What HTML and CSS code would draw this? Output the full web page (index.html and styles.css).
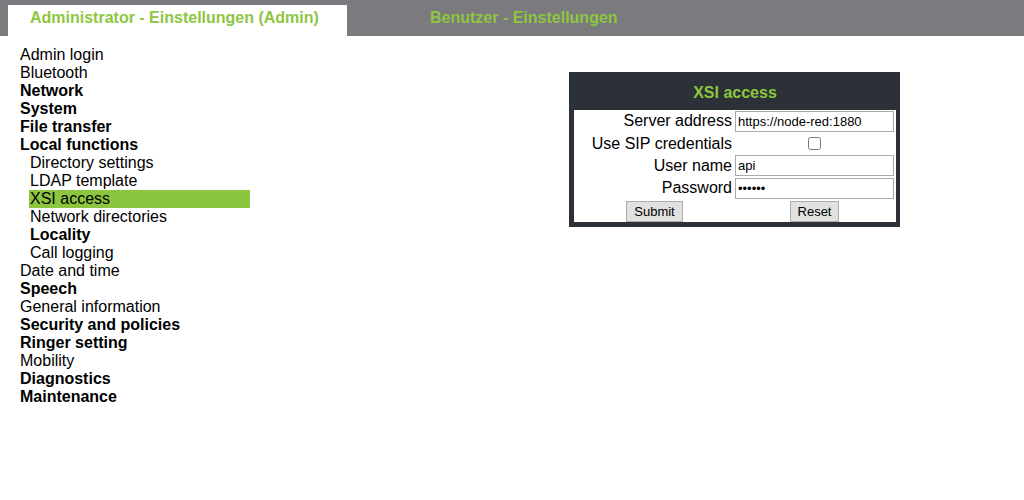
FILE: index.html
```html
<!DOCTYPE html>
<html>

<head>
    <meta charset="UTF-8">
    <title>XSI access</title>
    <link rel="stylesheet" href="styles.css">
</head>

<body>
    <div class="tabs">
        <div class="tab active">Administrator - Einstellungen (Admin)</div>
        <div class="tab">Benutzer - Einstellungen</div>
    </div>
    <div class="main">
        <ul class="menu">
            <li>Admin login</li>
            <li>Bluetooth</li>
            <li class="bold">Network</li>
            <li class="bold">System</li>
            <li class="bold">File transfer</li>
            <li class="bold">Local functions</li>
            <li class="sub">Directory settings</li>
            <li class="sub">LDAP template</li>
            <li class="sub selected">XSI access</li>
            <li class="sub">Network directories</li>
            <li class="sub bold">Locality</li>
            <li class="sub">Call logging</li>
            <li>Date and time</li>
            <li class="bold">Speech</li>
            <li>General information</li>
            <li class="bold">Security and policies</li>
            <li class="bold">Ringer setting</li>
            <li>Mobility</li>
            <li class="bold">Diagnostics</li>
            <li class="bold">Maintenance</li>
        </ul>
        <div class="panel">
            <div class="title">XSI access</div>
            <table class="form">
                <tr>
                    <td class="label">Server address</td>
                    <td class="field"><input type="text" value="https://node-red:1880"></td>
                </tr>
                <tr>
                    <td class="label">Use SIP credentials</td>
                    <td class="field center"><input type="checkbox"></td>
                </tr>
                <tr>
                    <td class="label">User name</td>
                    <td class="field"><input type="text" value="api"></td>
                </tr>
                <tr>
                    <td class="label">Password</td>
                    <td class="field"><input type="password" value="secret"></td>
                </tr>
                <tr>
                    <td class="center"><button>Submit</button></td>
                    <td class="field center"><button>Reset</button></td>
                </tr>
            </table>
        </div>
    </div>
</body>

</html>
```

FILE: styles.css
```css
body {
    margin: 0;
    font-family: "Liberation Sans", Arial, sans-serif;
    color: #000;
}

.tabs {
    display: flex;
    align-items: flex-end;
    height: 36px;
    padding-left: 8px;
    background-color: #7b7a7f;
}

.tab {
    height: 31px;
    line-height: 26px;
    font-size: 16px;
    font-weight: bold;
    color: #8dc63f;
}

.tab.active {
    width: 317px;
    padding-left: 22px;
    background-color: #fff;
}

.tab:not(.active) {
    padding-left: 83px;
}

.main {
    display: flex;
    align-items: flex-start;
}

.menu {
    list-style: none;
    margin: 10px 0 0 0;
    padding: 0 0 0 20px;
    width: 230px;
    font-size: 16px;
    line-height: 18px;
}

.menu .bold {
    font-weight: bold;
}

.menu .sub {
    padding-left: 10px;
}

.menu .selected {
    margin-left: 9px;
    padding-left: 1px;
    background-color: #8cc63f;
}

.panel {
    margin: 36px 0 0 319px;
    width: 322px;
    padding: 0 4px 5px 5px;
    background-color: #2b3136;
}

.title {
    height: 38px;
    line-height: 41px;
    text-align: center;
    font-size: 16px;
    font-weight: bold;
    color: #8cc63f;
}

.form {
    width: 100%;
    border-collapse: collapse;
    background-color: #fff;
    font-size: 16px;
    table-layout: fixed;
}

.form tr {
    height: 22.4px;
}

.form td {
    padding: 0;
}

.form .label {
    padding-right: 3px;
    text-align: right;
}

.form .field {
    padding-right: 2px;
}

.form .center {
    text-align: center;
}

.form input[type="text"],
.form input[type="password"] {
    box-sizing: border-box;
    width: 100%;
    height: 21px;
    margin: 0;
    padding: 1px 2px;
    border: 1px solid #a9a9a9;
    font-family: "Liberation Sans", Arial, sans-serif;
    font-size: 13px;
    vertical-align: middle;
}

.form input[type="checkbox"] {
    margin: 3px 0 0;
}

.form button {
    height: 21px;
    margin: 1px 0 0;
    padding: 0 7px;
    border: 1px solid #adadad;
    background-color: #e1e1e1;
    font-family: "Liberation Sans", Arial, sans-serif;
    font-size: 13px;
    color: #000;
}
```
